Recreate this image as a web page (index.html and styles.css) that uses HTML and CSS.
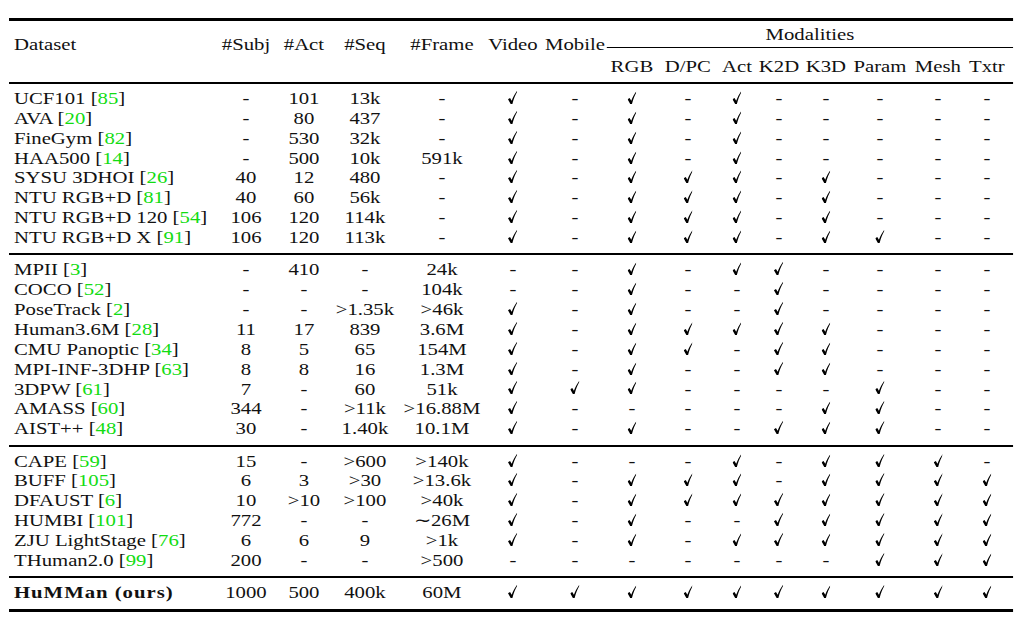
FILE: index.html
```html
<!DOCTYPE html>
<html>
<head>
  <title>Dataset comparison</title>
  <link rel="stylesheet" href="styles.css">
</head>
<body>
  <svg class="defs">
    <symbol id="ck" viewBox="0 0 9 13" preserveAspectRatio="none">
      <path d="M0 8.3 L2 6.9 L3.6 9.7 C5 6 6.7 2.8 8.7 0 L9 0.7 C7.2 3.6 5.6 7.6 4.3 13 L2.6 13 Z"/>
    </symbol>
  </svg>

  <div class="tbl">
    <div class="head">
      <span class="h name">Dataset</span>
      <span class="h">#Subj</span>
      <span class="h">#Act</span>
      <span class="h">#Seq</span>
      <span class="h">#Frame</span>
      <span class="h">Video</span>
      <span class="h">Mobile</span>
      <span class="mod">Modalities</span>
      <span class="sub">RGB</span>
      <span class="sub">D/PC</span>
      <span class="sub">Act</span>
      <span class="sub">K2D</span>
      <span class="sub">K3D</span>
      <span class="sub">Param</span>
      <span class="sub">Mesh</span>
      <span class="sub">Txtr</span>
    </div>

    <div class="grp">
      <div class="row"><span>UCF101 [<em>85</em>]</span><span>-</span><span>101</span><span>13k</span><span>-</span><span><svg class="ck"><use href="#ck"/></svg></span><span>-</span><span><svg class="ck"><use href="#ck"/></svg></span><span>-</span><span><svg class="ck"><use href="#ck"/></svg></span><span>-</span><span>-</span><span>-</span><span>-</span><span>-</span></div>
      <div class="row"><span>AVA [<em>20</em>]</span><span>-</span><span>80</span><span>437</span><span>-</span><span><svg class="ck"><use href="#ck"/></svg></span><span>-</span><span><svg class="ck"><use href="#ck"/></svg></span><span>-</span><span><svg class="ck"><use href="#ck"/></svg></span><span>-</span><span>-</span><span>-</span><span>-</span><span>-</span></div>
      <div class="row"><span>FineGym [<em>82</em>]</span><span>-</span><span>530</span><span>32k</span><span>-</span><span><svg class="ck"><use href="#ck"/></svg></span><span>-</span><span><svg class="ck"><use href="#ck"/></svg></span><span>-</span><span><svg class="ck"><use href="#ck"/></svg></span><span>-</span><span>-</span><span>-</span><span>-</span><span>-</span></div>
      <div class="row"><span>HAA500 [<em>14</em>]</span><span>-</span><span>500</span><span>10k</span><span>591k</span><span><svg class="ck"><use href="#ck"/></svg></span><span>-</span><span><svg class="ck"><use href="#ck"/></svg></span><span>-</span><span><svg class="ck"><use href="#ck"/></svg></span><span>-</span><span>-</span><span>-</span><span>-</span><span>-</span></div>
      <div class="row"><span>SYSU 3DHOI [<em>26</em>]</span><span>40</span><span>12</span><span>480</span><span>-</span><span><svg class="ck"><use href="#ck"/></svg></span><span>-</span><span><svg class="ck"><use href="#ck"/></svg></span><span><svg class="ck"><use href="#ck"/></svg></span><span><svg class="ck"><use href="#ck"/></svg></span><span>-</span><span><svg class="ck"><use href="#ck"/></svg></span><span>-</span><span>-</span><span>-</span></div>
      <div class="row"><span>NTU RGB+D [<em>81</em>]</span><span>40</span><span>60</span><span>56k</span><span>-</span><span><svg class="ck"><use href="#ck"/></svg></span><span>-</span><span><svg class="ck"><use href="#ck"/></svg></span><span><svg class="ck"><use href="#ck"/></svg></span><span><svg class="ck"><use href="#ck"/></svg></span><span>-</span><span><svg class="ck"><use href="#ck"/></svg></span><span>-</span><span>-</span><span>-</span></div>
      <div class="row"><span>NTU RGB+D 120 [<em>54</em>]</span><span>106</span><span>120</span><span>114k</span><span>-</span><span><svg class="ck"><use href="#ck"/></svg></span><span>-</span><span><svg class="ck"><use href="#ck"/></svg></span><span><svg class="ck"><use href="#ck"/></svg></span><span><svg class="ck"><use href="#ck"/></svg></span><span>-</span><span><svg class="ck"><use href="#ck"/></svg></span><span>-</span><span>-</span><span>-</span></div>
      <div class="row"><span>NTU RGB+D X [<em>91</em>]</span><span>106</span><span>120</span><span>113k</span><span>-</span><span><svg class="ck"><use href="#ck"/></svg></span><span>-</span><span><svg class="ck"><use href="#ck"/></svg></span><span><svg class="ck"><use href="#ck"/></svg></span><span><svg class="ck"><use href="#ck"/></svg></span><span>-</span><span><svg class="ck"><use href="#ck"/></svg></span><span><svg class="ck"><use href="#ck"/></svg></span><span>-</span><span>-</span></div>
    </div>

    <div class="grp">
      <div class="row"><span>MPII [<em>3</em>]</span><span>-</span><span>410</span><span>-</span><span>24k</span><span>-</span><span>-</span><span><svg class="ck"><use href="#ck"/></svg></span><span>-</span><span><svg class="ck"><use href="#ck"/></svg></span><span><svg class="ck"><use href="#ck"/></svg></span><span>-</span><span>-</span><span>-</span><span>-</span></div>
      <div class="row"><span>COCO [<em>52</em>]</span><span>-</span><span>-</span><span>-</span><span>104k</span><span>-</span><span>-</span><span><svg class="ck"><use href="#ck"/></svg></span><span>-</span><span>-</span><span><svg class="ck"><use href="#ck"/></svg></span><span>-</span><span>-</span><span>-</span><span>-</span></div>
      <div class="row"><span>PoseTrack [<em>2</em>]</span><span>-</span><span>-</span><span>&gt;1.35k</span><span>&gt;46k</span><span><svg class="ck"><use href="#ck"/></svg></span><span>-</span><span><svg class="ck"><use href="#ck"/></svg></span><span>-</span><span>-</span><span><svg class="ck"><use href="#ck"/></svg></span><span>-</span><span>-</span><span>-</span><span>-</span></div>
      <div class="row"><span>Human3.6M [<em>28</em>]</span><span>11</span><span>17</span><span>839</span><span>3.6M</span><span><svg class="ck"><use href="#ck"/></svg></span><span>-</span><span><svg class="ck"><use href="#ck"/></svg></span><span><svg class="ck"><use href="#ck"/></svg></span><span><svg class="ck"><use href="#ck"/></svg></span><span><svg class="ck"><use href="#ck"/></svg></span><span><svg class="ck"><use href="#ck"/></svg></span><span>-</span><span>-</span><span>-</span></div>
      <div class="row"><span>CMU Panoptic [<em>34</em>]</span><span>8</span><span>5</span><span>65</span><span>154M</span><span><svg class="ck"><use href="#ck"/></svg></span><span>-</span><span><svg class="ck"><use href="#ck"/></svg></span><span><svg class="ck"><use href="#ck"/></svg></span><span>-</span><span><svg class="ck"><use href="#ck"/></svg></span><span><svg class="ck"><use href="#ck"/></svg></span><span>-</span><span>-</span><span>-</span></div>
      <div class="row"><span>MPI-INF-3DHP [<em>63</em>]</span><span>8</span><span>8</span><span>16</span><span>1.3M</span><span><svg class="ck"><use href="#ck"/></svg></span><span>-</span><span><svg class="ck"><use href="#ck"/></svg></span><span>-</span><span>-</span><span><svg class="ck"><use href="#ck"/></svg></span><span><svg class="ck"><use href="#ck"/></svg></span><span>-</span><span>-</span><span>-</span></div>
      <div class="row"><span>3DPW [<em>61</em>]</span><span>7</span><span>-</span><span>60</span><span>51k</span><span><svg class="ck"><use href="#ck"/></svg></span><span><svg class="ck"><use href="#ck"/></svg></span><span><svg class="ck"><use href="#ck"/></svg></span><span>-</span><span>-</span><span>-</span><span>-</span><span><svg class="ck"><use href="#ck"/></svg></span><span>-</span><span>-</span></div>
      <div class="row"><span>AMASS [<em>60</em>]</span><span>344</span><span>-</span><span>&gt;11k</span><span>&gt;16.88M</span><span><svg class="ck"><use href="#ck"/></svg></span><span>-</span><span>-</span><span>-</span><span>-</span><span>-</span><span><svg class="ck"><use href="#ck"/></svg></span><span><svg class="ck"><use href="#ck"/></svg></span><span>-</span><span>-</span></div>
      <div class="row"><span>AIST++ [<em>48</em>]</span><span>30</span><span>-</span><span>1.40k</span><span>10.1M</span><span><svg class="ck"><use href="#ck"/></svg></span><span>-</span><span><svg class="ck"><use href="#ck"/></svg></span><span>-</span><span>-</span><span><svg class="ck"><use href="#ck"/></svg></span><span><svg class="ck"><use href="#ck"/></svg></span><span><svg class="ck"><use href="#ck"/></svg></span><span>-</span><span>-</span></div>
    </div>

    <div class="grp">
      <div class="row"><span>CAPE [<em>59</em>]</span><span>15</span><span>-</span><span>&gt;600</span><span>&gt;140k</span><span><svg class="ck"><use href="#ck"/></svg></span><span>-</span><span>-</span><span>-</span><span><svg class="ck"><use href="#ck"/></svg></span><span>-</span><span><svg class="ck"><use href="#ck"/></svg></span><span><svg class="ck"><use href="#ck"/></svg></span><span><svg class="ck"><use href="#ck"/></svg></span><span>-</span></div>
      <div class="row"><span>BUFF [<em>105</em>]</span><span>6</span><span>3</span><span>&gt;30</span><span>&gt;13.6k</span><span><svg class="ck"><use href="#ck"/></svg></span><span>-</span><span><svg class="ck"><use href="#ck"/></svg></span><span><svg class="ck"><use href="#ck"/></svg></span><span><svg class="ck"><use href="#ck"/></svg></span><span>-</span><span><svg class="ck"><use href="#ck"/></svg></span><span><svg class="ck"><use href="#ck"/></svg></span><span><svg class="ck"><use href="#ck"/></svg></span><span><svg class="ck"><use href="#ck"/></svg></span></div>
      <div class="row"><span>DFAUST [<em>6</em>]</span><span>10</span><span>&gt;10</span><span>&gt;100</span><span>&gt;40k</span><span><svg class="ck"><use href="#ck"/></svg></span><span>-</span><span><svg class="ck"><use href="#ck"/></svg></span><span><svg class="ck"><use href="#ck"/></svg></span><span><svg class="ck"><use href="#ck"/></svg></span><span><svg class="ck"><use href="#ck"/></svg></span><span><svg class="ck"><use href="#ck"/></svg></span><span><svg class="ck"><use href="#ck"/></svg></span><span><svg class="ck"><use href="#ck"/></svg></span><span><svg class="ck"><use href="#ck"/></svg></span></div>
      <div class="row"><span>HUMBI [<em>101</em>]</span><span>772</span><span>-</span><span>-</span><span>&#8764;26M</span><span><svg class="ck"><use href="#ck"/></svg></span><span>-</span><span><svg class="ck"><use href="#ck"/></svg></span><span>-</span><span>-</span><span><svg class="ck"><use href="#ck"/></svg></span><span><svg class="ck"><use href="#ck"/></svg></span><span><svg class="ck"><use href="#ck"/></svg></span><span><svg class="ck"><use href="#ck"/></svg></span><span><svg class="ck"><use href="#ck"/></svg></span></div>
      <div class="row"><span>ZJU LightStage [<em>76</em>]</span><span>6</span><span>6</span><span>9</span><span>&gt;1k</span><span><svg class="ck"><use href="#ck"/></svg></span><span>-</span><span><svg class="ck"><use href="#ck"/></svg></span><span>-</span><span><svg class="ck"><use href="#ck"/></svg></span><span><svg class="ck"><use href="#ck"/></svg></span><span><svg class="ck"><use href="#ck"/></svg></span><span><svg class="ck"><use href="#ck"/></svg></span><span><svg class="ck"><use href="#ck"/></svg></span><span><svg class="ck"><use href="#ck"/></svg></span></div>
      <div class="row"><span>THuman2.0 [<em>99</em>]</span><span>200</span><span>-</span><span>-</span><span>&gt;500</span><span>-</span><span>-</span><span>-</span><span>-</span><span>-</span><span>-</span><span>-</span><span><svg class="ck"><use href="#ck"/></svg></span><span><svg class="ck"><use href="#ck"/></svg></span><span><svg class="ck"><use href="#ck"/></svg></span></div>
    </div>

    <div class="grp">
      <div class="row ours"><span>HuMMan (ours)</span><span>1000</span><span>500</span><span>400k</span><span>60M</span><span><svg class="ck"><use href="#ck"/></svg></span><span><svg class="ck"><use href="#ck"/></svg></span><span><svg class="ck"><use href="#ck"/></svg></span><span><svg class="ck"><use href="#ck"/></svg></span><span><svg class="ck"><use href="#ck"/></svg></span><span><svg class="ck"><use href="#ck"/></svg></span><span><svg class="ck"><use href="#ck"/></svg></span><span><svg class="ck"><use href="#ck"/></svg></span><span><svg class="ck"><use href="#ck"/></svg></span><span><svg class="ck"><use href="#ck"/></svg></span></div>
    </div>
  </div>
</body>
</html>
```

FILE: styles.css
```css
html, body {
  padding: 0;
  margin: 0;
  background: #fff;
}

body {
  font-family: "Liberation Serif", "Times New Roman", serif;
  font-size: 17px;
  color: #111;
}

.defs {
  width: 0;
  height: 0;
  display: block;
  overflow: hidden;
}

.tbl {
  --cols: 170.5px 47.5px 47.5px 52.5px 73.8px 42.6px 59px 34.4px 57.4px 23px 45.9px 31.1px 57.4px 37.7px 42.6px;
  width: 823px;
  margin: 18px 0 0 9px;
  transform: scaleX(1.22);
  transform-origin: 0 0;
  border-top: 3px solid #000;
  border-bottom: 3px solid #000;
}

.head {
  display: grid;
  grid-template-columns: var(--cols);
  grid-template-rows: 27px 34px;
  border-bottom: 2px solid #000;
  line-height: 19.86px;
}

.head span {
  display: flex;
  justify-content: center;
  white-space: nowrap;
}

.head .h {
  grid-row: 1 / 3;
  align-self: start;
  padding-top: 14px;
}

.head .name {
  justify-content: flex-start;
  padding-left: 4.1px;
}

.head .mod {
  grid-row: 1;
  grid-column: 8 / -1;
  margin-left: -3.3px;
  padding-top: 4px;
  border-bottom: 1px solid #000;
  box-sizing: border-box;
}

.head .sub {
  grid-row: 2;
  align-self: start;
  padding-top: 8.5px;
}

.grp {
  padding: 5px 0 5.5px;
}
.grp + .grp {
  border-top: 2px solid #000;
}

.row {
  display: grid;
  grid-template-columns: var(--cols);
  height: 19.86px;
  line-height: 19.86px;
}

.row span {
  display: flex;
  justify-content: center;
  align-items: center;
  white-space: nowrap;
}

.row span:first-child {
  justify-content: flex-start;
  padding-left: 4.1px;
}

.row em {
  font-style: normal;
  color: #12dc12;
}

.ours span:first-child {
  font-weight: bold;
  letter-spacing: 0.8px;
}

.ck {
  width: 7.6px;
  height: 13px;
  margin-bottom: 3px;
  fill: #000;
}
```
